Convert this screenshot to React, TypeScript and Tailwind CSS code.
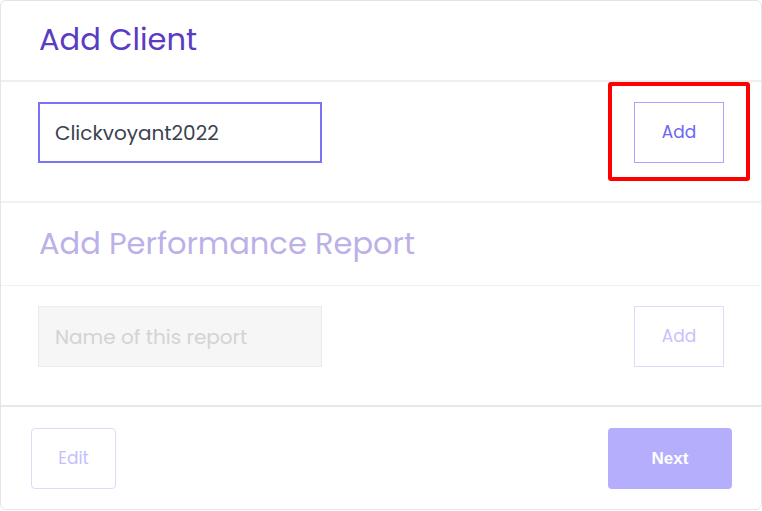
import { useState } from "react";

const font = { fontFamily: "Poppins, Inter, 'Noto Sans', sans-serif" };

export default function App() {
  const [client, setClient] = useState("Clickvoyant2022");

  return (
    <div className="w-[762px] h-[511px] bg-white" style={font}>
      <div className="relative flex h-[510px] flex-col rounded-md border border-[#e4e4e4] bg-white">
        {/* Add Client */}
        <div className="flex h-[81px] items-center border-b-2 border-[#efefef] pl-[38px]">
          <h2 className="text-[30.5px] leading-none text-[#5a3cc4]">Add Client</h2>
        </div>
        <div className="flex h-[121px] items-start justify-between border-b-2 border-[#f1f1f1] pl-[37px] pr-[37px] pt-[20px]">
          <input
            value={client}
            onChange={(e) => setClient(e.target.value)}
            className="h-[61px] w-[284px] border-2 border-[#7a73f6] px-[15px] text-[20px] text-[#3b4250] outline-none"
          />
          <button className="h-[61px] w-[90px] border border-[#aaa6ff] text-[17px] text-[#6d66f5]">Add</button>
        </div>

        {/* Add Performance Report */}
        <div className="flex h-[83px] items-center border-b border-[#f1f1f1] pl-[38px]">
          <h2 className="text-[30.5px] leading-none text-[#bdb0e8]">Add Performance Report</h2>
        </div>
        <div className="flex h-[121px] items-start justify-between border-b-2 border-[#e8e8e8] pl-[37px] pr-[37px] pt-[20px]">
          <input
            disabled
            placeholder="Name of this report"
            className="h-[61px] w-[284px] border border-[#ebebeb] bg-[#f6f6f6] px-[16px] text-[20px] placeholder:text-[#d3d3d3]"
          />
          <button disabled className="h-[61px] w-[90px] border border-[#dcdaff] text-[17px] text-[#c6c2fd]">
            Add
          </button>
        </div>

        {/* footer */}
        <div className="flex flex-1 items-start justify-between pl-[30px] pr-[29px] pt-[21px]">
          <button className="h-[61px] w-[85px] rounded-sm border border-[#dcdaff] text-[17px] text-[#c4c0fd]">Edit</button>
          <button
            className="h-[61px] w-[124px] rounded-sm bg-[#b4aefc] text-[17px] font-semibold text-white"
            style={{ fontFamily: "'Liberation Sans', Arial, sans-serif" }}
          >
            Next
          </button>
        </div>

        {/* annotation highlight */}
        <div className="pointer-events-none absolute left-[607px] top-[81px] h-[99px] w-[142px] rounded-[3px] border-[4px] border-[#ff0000]" />
      </div>
    </div>
  );
}
